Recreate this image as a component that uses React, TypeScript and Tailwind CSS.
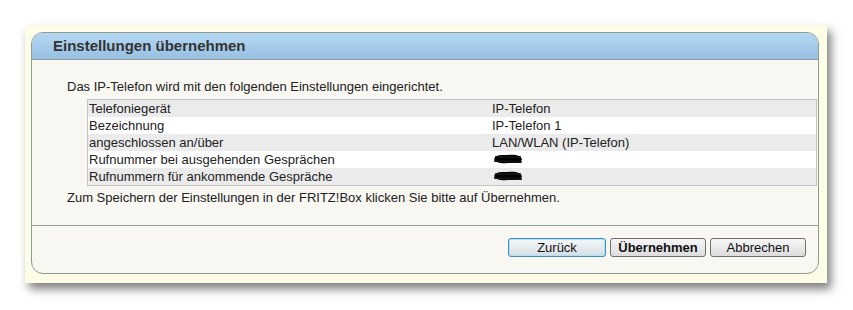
const rows: [string, string | null][] = [
  ["Telefoniegerät", "IP-Telefon"],
  ["Bezeichnung", "IP-Telefon 1"],
  ["angeschlossen an/über", "LAN/WLAN (IP-Telefon)"],
  ["Rufnummer bei ausgehenden Gesprächen", null],
  ["Rufnummern für ankommende Gespräche", null],
];

const Scribble = () => (
  <svg width="32" height="13" viewBox="0 0 32 13">
    <path d="M2 6 C4 1, 10 2, 16 2 C22 1, 28 2, 30 6 C29 11, 22 10, 16 10 C10 11, 4 10, 2 6 Z" fill="#000" />
    <path d="M4 4 L28 4 M3 8 L29 9" stroke="#111" strokeWidth="2" strokeLinecap="round" />
  </svg>
);

const App = () => {
  return (
    <div className="w-[853px] h-[310px] bg-white pt-[25px] pl-[25px] font-['Liberation_Sans',Arial,sans-serif]">
      {/* yellow frame */}
      <div className="w-[802px] h-[258px] bg-[#fdfce6] shadow-[4px_6px_9px_rgba(0,0,0,0.5)] pl-[6px] pt-[7px]">
        <div className="w-[788px] h-[242px] border border-[#8d9b95] rounded-[12px] bg-[#f8f7f2] flex flex-col overflow-hidden">
          {/* header */}
          <div className="h-[27px] shrink-0 border-b border-[#8d9b95] bg-gradient-to-b from-[#b4d8f2] to-[#98c0e2] flex items-center pl-[21px]">
            <h2 className="text-[15px] font-bold text-[#333]">Einstellungen übernehmen</h2>
          </div>
          {/* content */}
          <div className="h-[165px] shrink-0 pt-[19px] pl-[35px] text-[13px] leading-[16px] text-[#222]">
            <p>Das IP-Telefon wird mit den folgenden Einstellungen eingerichtet.</p>
            <div className="mt-[4px] ml-[20px] w-[730px] border border-[#c4c4c4]">
              {rows.map(([label, value], i) => (
                <div
                  key={label}
                  className={`flex h-[17px] items-center pl-[1px] ${i % 2 === 0 ? "bg-[#ebebeb]" : "bg-white"}`}
                >
                  <span className="w-[403px]">{label}</span>
                  {value ? <span>{value}</span> : <Scribble />}
                </div>
              ))}
            </div>
            <p className="mt-[4px]">Zum Speichern der Einstellungen in der FRITZ!Box klicken Sie bitte auf Übernehmen.</p>
          </div>
          {/* footer */}
          <div className="flex-1 border-t border-[#8d9b95] flex justify-end gap-[4px] pt-[12px] pr-[12px] text-[13px] text-[#111]">
            <button className="w-[98px] h-[19px] rounded-[3px] border border-[#3c8fc0] bg-gradient-to-b from-[#f4f8fa] to-[#d6dde2] shadow-[inset_0_0_0_1px_#b5e0f7] leading-none">
              Zurück
            </button>
            <button className="w-[96px] h-[19px] rounded-[3px] border border-[#707070] bg-gradient-to-b from-[#f7f7f7] to-[#dcdcdc] font-bold leading-none">
              Übernehmen
            </button>
            <button className="w-[96px] h-[19px] rounded-[3px] border border-[#707070] bg-gradient-to-b from-[#f7f7f7] to-[#dcdcdc] leading-none">
              Abbrechen
            </button>
          </div>
        </div>
      </div>
    </div>
  );
};

export default App;
